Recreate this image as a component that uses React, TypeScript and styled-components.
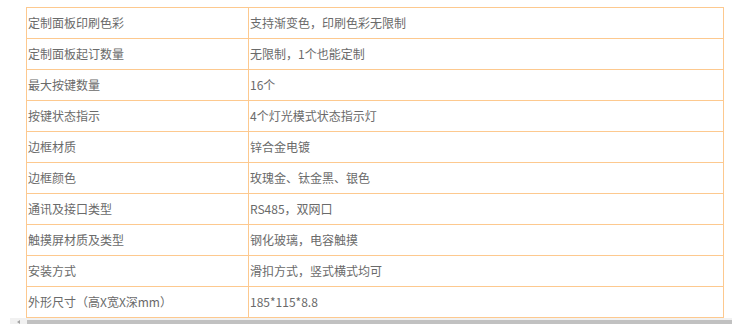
import React from 'react'
import styled, { createGlobalStyle } from 'styled-components'

const specs: [string, string][] = [
  ['定制面板印刷色彩', '支持渐变色，印刷色彩无限制'],
  ['定制面板起订数量', '无限制，1个也能定制'],
  ['最大按键数量', '16个'],
  ['按键状态指示', '4个灯光模式状态指示灯'],
  ['边框材质', '锌合金电镀'],
  ['边框颜色', '玫瑰金、钛金黑、银色'],
  ['通讯及接口类型', 'RS485，双网口'],
  ['触摸屏材质及类型', '钢化玻璃，电容触摸'],
  ['安装方式', '滑扣方式，竖式横式均可'],
  ['外形尺寸（高X宽X深mm）', '185*115*8.8'],
]

const GlobalStyle = createGlobalStyle`
  html, body {
    margin: 0;
    padding: 0;
    background: #fff;
    overflow: hidden;
  }
  body {
    font-family: "Noto Sans CJK SC", "Noto Sans", sans-serif;
  }
`

export default function App() {
  return (
    <Page>
      <GlobalStyle />
      <Content>
        <SpecTable>
          <tbody>
            {specs.map(([name, value]) => (
              <tr key={name}>
                <Cell>{name}</Cell>
                <Cell>{value}</Cell>
              </tr>
            ))}
          </tbody>
        </SpecTable>
      </Content>
      <ScrollBar>
        <ScrollArrow />
        <ScrollThumb />
      </ScrollBar>
    </Page>
  )
}

const Page = styled.div`
  width: 732px;
  height: 324px;
  display: flex;
  flex-direction: column;
`

const Content = styled.div`
  flex: 1;
  padding: 7px 8px 0 26px;
`

const SpecTable = styled.table`
  border-collapse: collapse;
  width: 698px;
  table-layout: fixed;
`

const Cell = styled.td`
  border: 1px solid #fdc98f;
  height: 30px;
  padding: 0 2px 0 1px;
  font-size: 12px;
  color: #6a6a6a;
  line-height: 30px;
  white-space: nowrap;

  &:first-child {
    width: 218px;
  }
`

const ScrollBar = styled.div`
  display: flex;
  height: 6px;
  margin-left: 10px;
  background: #f1f1f1;
`

/* small left-pointing arrow of the scroll button */
const ScrollArrow = styled.div`
  width: 17px;
  position: relative;

  &::after {
    content: '';
    position: absolute;
    left: 7px;
    top: 2px;
    border-style: solid;
    border-width: 2px 3px 2px 0;
    border-color: transparent #a3a3a3 transparent transparent;
  }
`

const ScrollThumb = styled.div`
  flex: 1;
  margin-top: 2px;
  background: #c1c1c1;
`
